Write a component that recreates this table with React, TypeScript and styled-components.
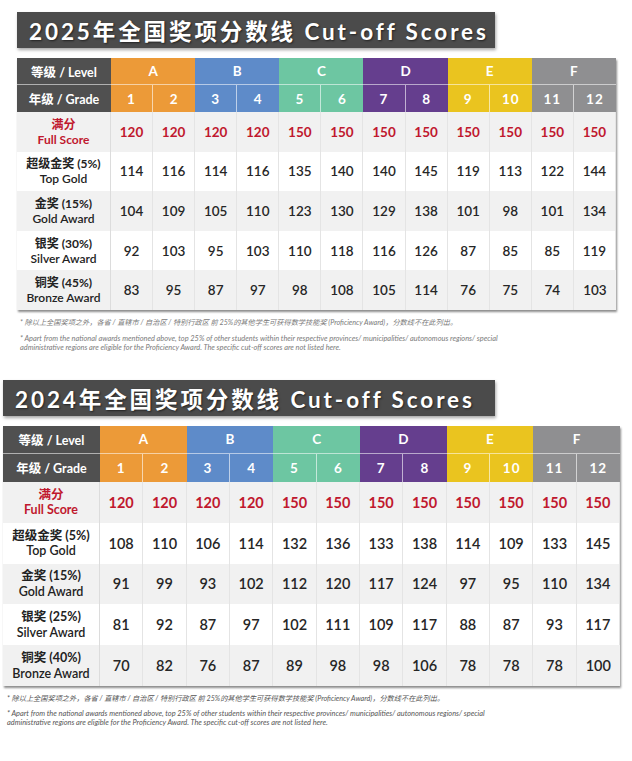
import React from "react";
import styled, { createGlobalStyle } from "styled-components";

const Global = createGlobalStyle`
  html, body { margin: 0; padding: 0; background: #ffffff; }
  body { font-family: Lato, "Noto Sans CJK SC", sans-serif; width: 632px; }
`;

const LEVELS = [
  { name: "A", color: "#ec9a38" },
  { name: "B", color: "#5e8bc9" },
  { name: "C", color: "#6dc6a2" },
  { name: "D", color: "#653e8e" },
  { name: "E", color: "#eac41f" },
  { name: "F", color: "#8f8f91" },
];

type RowData = { zh: string; en: string; values: number[]; full?: boolean };

const FULL = [120, 120, 120, 120, 150, 150, 150, 150, 150, 150, 150, 150];

const DATA_2025: RowData[] = [
  { zh: "满分", en: "Full Score", values: FULL, full: true },
  { zh: "超级金奖 (5%)", en: "Top Gold", values: [114, 116, 114, 116, 135, 140, 140, 145, 119, 113, 122, 144] },
  { zh: "金奖 (15%)", en: "Gold Award", values: [104, 109, 105, 110, 123, 130, 129, 138, 101, 98, 101, 134] },
  { zh: "银奖 (30%)", en: "Silver Award", values: [92, 103, 95, 103, 110, 118, 116, 126, 87, 85, 85, 119] },
  { zh: "铜奖 (45%)", en: "Bronze Award", values: [83, 95, 87, 97, 98, 108, 105, 114, 76, 75, 74, 103] },
];

const DATA_2024: RowData[] = [
  { zh: "满分", en: "Full Score", values: FULL, full: true },
  { zh: "超级金奖 (5%)", en: "Top Gold", values: [108, 110, 106, 114, 132, 136, 133, 138, 114, 109, 133, 145] },
  { zh: "金奖 (15%)", en: "Gold Award", values: [91, 99, 93, 102, 112, 120, 117, 124, 97, 95, 110, 134] },
  { zh: "银奖 (25%)", en: "Silver Award", values: [81, 92, 87, 97, 102, 111, 109, 117, 88, 87, 93, 117] },
  { zh: "铜奖 (40%)", en: "Bronze Award", values: [70, 82, 76, 87, 89, 98, 98, 106, 78, 78, 78, 100] },
];

const Page = styled.div`
  display: flex;
  flex-direction: column;
  padding-top: 12px;
`;

const SectionWrap = styled.section<{ $indent: number; $width: number; $gapAfter: number }>`
  display: flex;
  flex-direction: column;
  margin-left: ${(p) => p.$indent}px;
  width: ${(p) => p.$width}px;
  margin-bottom: ${(p) => p.$gapAfter}px;
`;

const Banner = styled.h1<{ $width: number }>`
  margin: 0;
  width: ${(p) => p.$width}px;
  height: 36px;
  box-sizing: border-box;
  background: #4b4b4b;
  color: #ffffff;
  display: flex;
  align-items: center;
  padding-left: 12px;
  font-family: Lato, "Noto Sans CJK SC", sans-serif;
  font-weight: 700;
  font-size: 22.5px;
  letter-spacing: 2.9px;
  white-space: nowrap;
  overflow: hidden;
  text-shadow: 1px 1px 2px rgba(0, 0, 0, 0.55);
  box-shadow: 1px 2px 3px rgba(0, 0, 0, 0.35);
`;

const Table = styled.div<{ $label: number; $head: number; $row: number }>`
  margin-top: 10px;
  display: grid;
  grid-template-columns: ${(p) => p.$label}px repeat(12, 1fr);
  grid-template-rows: ${(p) => p.$head}px ${(p) => p.$head}px repeat(5, ${(p) => p.$row}px);
  box-shadow: 1px 2px 2px rgba(0, 0, 0, 0.45);
  background: #ffffff;
`;

const HeadLabel = styled.div<{ $bottom?: boolean }>`
  background: #505050;
  color: #ffffff;
  font-weight: 700;
  font-size: 12.5px;
  display: flex;
  align-items: center;
  justify-content: center;
  white-space: nowrap;
  border-bottom: ${(p) => (p.$bottom ? "1px solid rgba(255,255,255,0.55)" : "none")};
`;

const LevelCell = styled.div<{ $color: string }>`
  grid-column: span 2;
  background: ${(p) => p.$color};
  color: #ffffff;
  font-weight: 700;
  font-size: 13.5px;
  display: flex;
  align-items: center;
  justify-content: center;
  border-bottom: 1px solid rgba(255, 255, 255, 0.55);
`;

const GradeCell = styled.div<{ $color: string; $split: boolean }>`
  background: ${(p) => p.$color};
  color: #ffffff;
  font-weight: 700;
  font-size: 13.5px;
  letter-spacing: 1px;
  display: flex;
  align-items: center;
  justify-content: center;
  border-right: ${(p) => (p.$split ? "1px solid rgba(255,255,255,0.6)" : "none")};
`;

const RowLabel = styled.div<{ $shade: boolean; $full?: boolean; $size: number }>`
  background: ${(p) => (p.$shade ? "#f1f1f1" : "#ffffff")};
  color: ${(p) => (p.$full ? "#c0182e" : "#222222")};
  display: flex;
  flex-direction: column;
  align-items: center;
  justify-content: center;
  font-size: ${(p) => p.$size}px;
  line-height: 1.25;
  border-right: 1px solid #dcdcdc;
  white-space: nowrap;
`;

const LabelZh = styled.span`
  font-weight: 700;
`;

const LabelEn = styled.span<{ $full?: boolean }>`
  font-weight: ${(p) => (p.$full ? 700 : 600)};
`;

const Value = styled.div<{ $shade: boolean; $full?: boolean; $size: number }>`
  background: ${(p) => (p.$shade ? "#f1f1f1" : "#ffffff")};
  color: ${(p) => (p.$full ? "#c0182e" : "#262626")};
  font-weight: ${(p) => (p.$full ? 700 : 600)};
  font-size: ${(p) => p.$size}px;
  display: flex;
  align-items: center;
  justify-content: center;
  border-right: 1px solid #e4e4e4;
  &:last-child { border-right: none; }
`;

const Notes = styled.div<{ $pad: number; $color: string; $gap: number }>`
  margin-top: 8px;
  padding-left: ${(p) => p.$pad}px;
  display: flex;
  flex-direction: column;
  gap: ${(p) => p.$gap}px;
  font-style: italic;
  color: ${(p) => p.$color};
  font-family: Lato, "Noto Sans CJK SC", sans-serif;
`;

const NoteZh = styled.p`
  margin: 0;
  font-size: 7.2px;
  line-height: 10px;
  white-space: nowrap;
`;

const NoteEn = styled.p`
  margin: 0;
  font-size: 7.4px;
  line-height: 9.5px;
  width: 490px;
`;

type SectionProps = {
  year: string;
  data: RowData[];
  indent: number;
  width: number;
  bannerWidth: number;
  label: number;
  head: number;
  row: number;
  num: number;
  lab: number;
  notePad: number;
  noteColor: string;
  noteGap: number;
  gapAfter: number;
};

function ScoreSection(p: SectionProps) {
  return (
    <SectionWrap $indent={p.indent} $width={p.width} $gapAfter={p.gapAfter}>
      <Banner $width={p.bannerWidth}>{p.year}年全国奖项分数线 Cut-off Scores</Banner>
      <Table $label={p.label} $head={p.head} $row={p.row}>
        <HeadLabel $bottom>等级 / Level</HeadLabel>
        {LEVELS.map((l) => (
          <LevelCell key={l.name} $color={l.color}>{l.name}</LevelCell>
        ))}
        <HeadLabel>年级 / Grade</HeadLabel>
        {Array.from({ length: 12 }, (_, i) => (
          <GradeCell key={i} $color={LEVELS[Math.floor(i / 2)].color} $split={i % 2 === 0}>
            {i + 1}
          </GradeCell>
        ))}
        {p.data.map((r, ri) => {
          const shade = ri % 2 === 0;
          return (
            <React.Fragment key={r.en}>
              <RowLabel $shade={shade} $full={r.full} $size={p.lab}>
                <LabelZh>{r.zh}</LabelZh>
                <LabelEn $full={r.full}>{r.en}</LabelEn>
              </RowLabel>
              {r.values.map((v, vi) => (
                <Value key={vi} $shade={shade} $full={r.full} $size={p.num}>
                  {v}
                </Value>
              ))}
            </React.Fragment>
          );
        })}
      </Table>
      <Notes $pad={p.notePad} $color={p.noteColor} $gap={p.noteGap}>
        <NoteZh>* 除以上全国奖项之外，各省 / 直辖市 / 自治区 / 特别行政区 前 25%的其他学生可获得数学技能奖 (Proficiency Award)，分数线不在此列出。</NoteZh>
        <NoteEn>
          * Apart from the national awards mentioned above, top 25% of other students within their respective provinces/ municipalities/ autonomous regions/ special administrative regions are eligible for the Proficiency Award. The specific cut-off scores are not listed here.
        </NoteEn>
      </Notes>
    </SectionWrap>
  );
}

export default function App() {
  return (
    <Page>
      <Global />
      <ScoreSection
        year="2025"
        data={DATA_2025}
        indent={17}
        width={599}
        bannerWidth={478}
        label={94}
        head={27}
        row={39.6}
        num={13.5}
        lab={12}
        notePad={3}
        noteColor="#7a7a7a"
        noteGap={6}
        gapAfter={27}
      />
      <ScoreSection
        year="2024"
        data={DATA_2024}
        indent={3}
        width={617}
        bannerWidth={492}
        label={97}
        head={28}
        row={40.8}
        num={14.5}
        lab={12.5}
        notePad={4}
        noteColor="#555555"
        noteGap={5}
        gapAfter={0}
      />
    </Page>
  );
}
